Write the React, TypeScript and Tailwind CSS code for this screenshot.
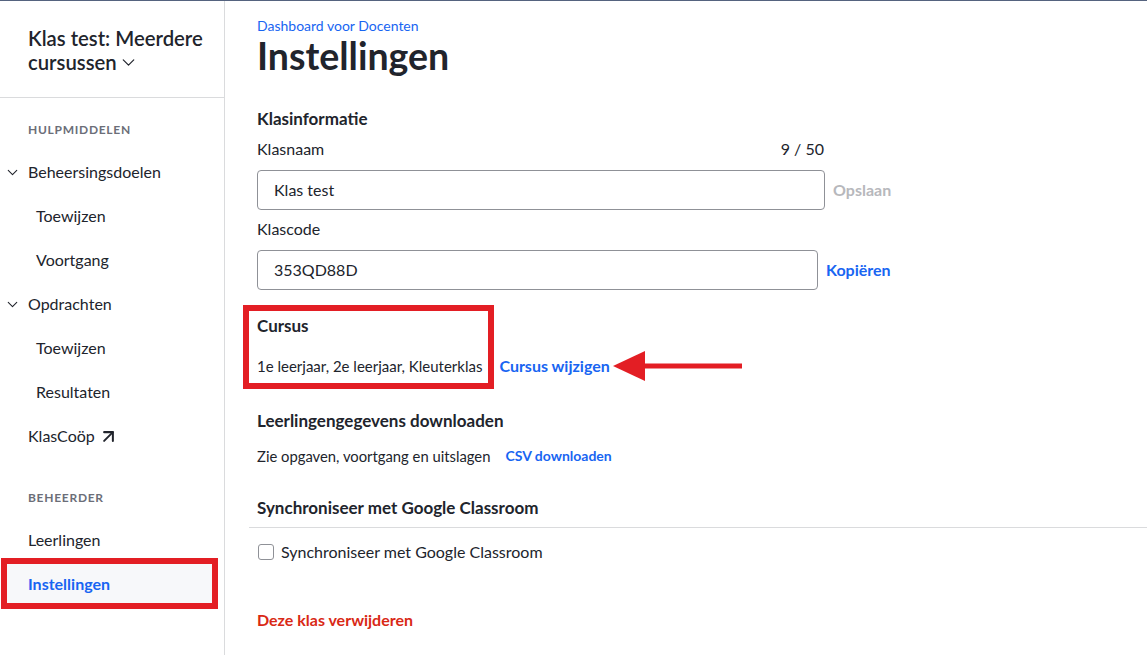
import { ArrowUpRight, ChevronDown } from "lucide-react";

const font = { fontFamily: "Lato, 'Noto Sans', sans-serif" };

const NavItem = ({
  label,
  indent = false,
  chevron = false,
  external = false,
}: {
  label: string;
  indent?: boolean;
  chevron?: boolean;
  external?: boolean;
}) => (
  <div
    className={`relative flex h-[44px] items-center text-[16px] text-[#21242c] ${
      indent ? "pl-[36px]" : "pl-[28px]"
    }`}
  >
    {chevron && (
      <ChevronDown
        className="absolute left-[4px] top-[14px]"
        size={17}
        strokeWidth={1.5}
      />
    )}
    <span>{label}</span>
    {external && (
      <ArrowUpRight className="ml-[3px]" size={21} strokeWidth={2.3} />
    )}
  </div>
);

const SectionLabel = ({ children }: { children: string }) => (
  <div className="pl-[28px] text-[12px] font-bold uppercase leading-[16px] tracking-[0.06em] text-[#6b6e78]">
    {children}
  </div>
);

const Sidebar = () => (
  <aside className="w-[225px] shrink-0 border-r border-[#dadbdd]">
    <div className="border-b border-[#dadbdd] pb-[23px] pl-[28px] pt-[25px]">
      <div className="text-[20.3px] font-semibold leading-[24px] text-[#21242c]">
        Klas test: Meerdere
        <br />
        cursussen
        <ChevronDown
          className="ml-[1px] inline-block align-[-3px]"
          size={21}
          strokeWidth={1.4}
        />
      </div>
    </div>

    <div className="mt-[24px]">
      <SectionLabel>Hulpmiddelen</SectionLabel>
    </div>
    <div className="mt-[12px]">
      <NavItem label="Beheersingsdoelen" chevron />
      <NavItem label="Toewijzen" indent />
      <NavItem label="Voortgang" indent />
      <NavItem label="Opdrachten" chevron />
      <NavItem label="Toewijzen" indent />
      <NavItem label="Resultaten" indent />
      <NavItem label="KlasCoöp" external />
    </div>

    <div className="mt-[32px]">
      <SectionLabel>Beheerder</SectionLabel>
    </div>
    <div className="mt-[12px]">
      <NavItem label="Leerlingen" />
      <div className="-mt-[4px] ml-[1px] w-[217px] border-[6px] border-[#e31e24]">
        <div className="flex h-[39px] items-center bg-[#f7f8fa] pl-[21px] pt-[1px] text-[16px] font-bold text-[#1865f2]">
          Instellingen
        </div>
      </div>
    </div>
  </aside>
);

const RedArrow = () => (
  <svg width="132" height="32" viewBox="0 0 132 32" className="ml-[3px]">
    <polygon points="0,16 32,1 32,31" fill="#e31e24" />
    <rect x="30" y="13.5" width="99" height="5" fill="#e31e24" />
  </svg>
);

const Main = () => (
  <main className="min-w-0 flex-1 pl-[32px] text-[#21242c]">
    <div className="mt-[16px] text-[14px] leading-[18px] text-[#1865f2]">
      Dashboard voor Docenten
    </div>
    <h1 className="-mt-[1px] text-[37.5px] font-bold leading-[44px]">
      Instellingen
    </h1>

    <h2 className="mt-[29px] text-[17px] font-bold leading-[24px]">
      Klasinformatie
    </h2>
    <div className="mt-[8px] flex w-[568px] justify-between text-[16px] leading-[20px]">
      <span>Klasnaam</span>
      <span className="pr-[1px]">9 / 50</span>
    </div>
    <div className="mt-[11px] flex items-center">
      <div className="flex h-[40px] w-[568px] items-center rounded-[4px] border border-[#8f9197] pl-[16px] text-[16px]">
        Klas test
      </div>
      <span className="ml-[8px] text-[16px] font-bold text-[#b7b8bc]">
        Opslaan
      </span>
    </div>
    <div className="mt-[9px] text-[16px] leading-[20px]">Klascode</div>
    <div className="mt-[11px] flex items-center">
      <div className="flex h-[40px] w-[561px] items-center rounded-[4px] border border-[#8f9197] pl-[16px] text-[16px]">
        353QD88D
      </div>
      <span className="ml-[8px] text-[16px] font-bold text-[#1865f2]">
        Kopiëren
      </span>
    </div>

    <div className="mt-[15px] flex items-end">
      <div className="-ml-[14px] border-[6px] border-[#e31e24] pb-[7px] pl-[8px] pr-[6px] pt-[3px]">
        <div className="text-[17px] font-bold leading-[24px]">Cursus</div>
        <div className="mt-[18px] text-[15px] leading-[20px]">
          1e leerjaar, 2e leerjaar, Kleuterklas
        </div>
      </div>
      <div className="mb-[7px] flex items-center">
        <span className="ml-[5px] text-[16px] font-bold leading-[20px] text-[#1865f2]">
          Cursus wijzigen
        </span>
        <RedArrow />
      </div>
    </div>

    <h2 className="mt-[20px] text-[17px] font-bold leading-[24px]">
      Leerlingengegevens downloaden
    </h2>
    <div className="mt-[13px] flex items-center text-[14.8px] leading-[20px]">
      <span>Zie opgaven, voortgang en uitslagen</span>
      <span className="ml-[15px] text-[14px] font-bold text-[#1865f2]">
        CSV downloaden
      </span>
    </div>

    <h2 className="mt-[30px] text-[17px] font-bold leading-[24px]">
      Synchroniseer met Google Classroom
    </h2>
    <div className="-ml-[8px] mt-[7px] border-t border-[#dadbdd]" />
    <label className="mt-[14px] flex items-center text-[16px] leading-[20px]">
      <span className="ml-[1px] h-[16px] w-[16px] rounded-[3px] border border-[#8f9197]" />
      <span className="ml-[7px]">Synchroniseer met Google Classroom</span>
    </label>

    <div className="mt-[48px] text-[16px] font-bold leading-[20px] text-[#d92916]">
      Deze klas verwijderen
    </div>
  </main>
);

export default function App() {
  return (
    <div
      className="flex min-h-[655px] border-t border-[#55637f] bg-white"
      style={font}
    >
      <Sidebar />
      <Main />
    </div>
  );
}
